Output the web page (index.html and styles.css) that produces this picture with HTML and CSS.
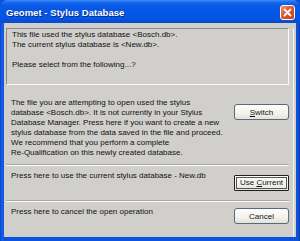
FILE: index.html
```html
<!DOCTYPE html>
<html>
<head>
<meta charset="utf-8">
<link rel="stylesheet" href="styles.css">
</head>
<body>
<div class="window">
  <div class="titlebar">
    <span class="title">Geomet - Stylus Database</span>
    <span class="close">
      <svg width="9" height="9" viewBox="0 0 9 9"><path d="M1.5 1.5 L7.5 7.5 M7.5 1.5 L1.5 7.5" stroke="#fff" stroke-width="1.8" stroke-linecap="round"/></svg>
    </span>
  </div>
  <div class="client">
    <div class="content">
      <div class="infobox">
        <div>This file used the stylus database &lt;Bosch.db&gt;.</div>
        <div>The current stylus database is &lt;New.db&gt;.</div>
        <div>&nbsp;</div>
        <div>Please select from the following...?</div>
      </div>
      <div class="row row-switch">
        <p class="text">The file you are attempting to open used the stylus<br>database &lt;Bosch.db&gt;. It is not currently in your Stylus<br>Database Manager. Press here if you want to create a new<br>stylus database from the data saved in the file and proceed.<br>We recommend that you perform a complete<br>Re-Qualification on this newly created database.</p>
        <button class="btn"><u>S</u>witch</button>
      </div>
      <div class="sep"></div>
      <div class="row row-use">
        <p class="text">Press here to use the current stylus database - New.db</p>
        <button class="btn btn-default"><span class="focus">Use <u>C</u>urrent</span></button>
      </div>
      <div class="sep"></div>
      <div class="row row-cancel">
        <p class="text">Press here to cancel the open operation</p>
        <button class="btn">Cancel</button>
      </div>
    </div>
  </div>
</div>
</body>
</html>
```
FILE: styles.css
```css
html, body {
  margin: 0;
  padding: 0;
  width: 300px;
  height: 241px;
  overflow: hidden;
  background: #0a4fd0;
}
.window {
  width: 300px;
  height: 241px;
  display: flex;
  flex-direction: column;
  background: linear-gradient(90deg, #0843c4 0px, #1a60e8 2px, #0a54e0 4px, #0a54e0 296px, #1350d8 298px, #0839b0 300px);
  border-radius: 7px 7px 0 0;
  font-family: "Liberation Sans", Arial, sans-serif;
  font-size: 8px;
  color: #111;
}
.titlebar {
  height: 23px;
  flex: none;
  box-sizing: border-box;
  display: flex;
  align-items: center;
  justify-content: space-between;
  padding: 2px 5px 0 6px;
  border-radius: 7px 7px 0 0;
  background: linear-gradient(180deg, #3d8ef8 0px, #1c6cf0 2px, #0a5ae6 5px, #0355e4 12px, #0456e6 18px, #0a4dd2 21px, #0a48c8 23px);
}
.title {
  color: #fff;
  font-family: "Liberation Sans", Arial, sans-serif;
  font-weight: bold;
  font-size: 9.5px;
  letter-spacing: 0.05px;
  text-shadow: 1px 1px 0 #0a2a8a;
}
.close {
  width: 15px;
  height: 15px;
  margin-top: -1px;
  box-sizing: border-box;
  border: 1px solid #fff;
  border-radius: 3px;
  background: linear-gradient(135deg, #f0916a 0%, #e0582e 45%, #c83a14 100%);
  display: flex;
  align-items: center;
  justify-content: center;
}
.client {
  flex: 1;
  margin: 0 4px 4px 4px;
  background: #d0cfcc;
  display: flex;
  padding: 5px 2px 0 2px;
}
.content {
  flex: 1;
  border-right: 1px solid #f4f4f2;
  padding-right: 4px;
  display: flex;
  flex-direction: column;
}
.infobox {
  height: 57px;
  box-sizing: border-box;
  flex: none;
  border-top: 1px solid #8a8a88;
  border-left: 1px solid #8a8a88;
  border-bottom: 1px solid #fbfbfb;
  border-right: 1px solid #fbfbfb;
  padding: 1px 0 0 5px;
  line-height: 10px;
}
.row {
  display: flex;
  align-items: flex-start;
  justify-content: space-between;
  box-sizing: border-box;
  flex: none;
}
.text {
  margin: 0;
  line-height: 10px;
}
.row-switch {
  padding: 13px 0 0 5px;
  height: 79px;
}
.row-switch .btn {
  margin-top: 6px;
}
.row-use {
  padding: 5px 0 0 5px;
  height: 34px;
}
.row-use .btn {
  margin-top: 4px;
}
.row-cancel {
  padding: 5px 0 0 5px;
  height: 34px;
}
.row-cancel .btn {
  margin-top: 1px;
}
.sep {
  height: 1px;
  flex: none;
  border-top: 1px solid #a8a8a6;
  background: #fafafa;
}
.btn {
  width: 55px;
  height: 16px;
  box-sizing: border-box;
  padding: 0;
  border: 1px solid #5a6a7e;
  border-radius: 3px;
  background: linear-gradient(180deg, #fdfdfb 0%, #f3f2ec 60%, #e4e2d8 100%);
  font-family: "Liberation Sans", Arial, sans-serif;
  font-size: 8px;
  color: #111;
  display: flex;
  align-items: center;
  justify-content: center;
  flex: none;
}
.btn-default {
  border: 1px solid #222;
  border-radius: 1px;
  padding: 1px;
}
.focus {
  display: block;
  width: 100%;
  height: 100%;
  line-height: 10px;
  box-sizing: border-box;
  border: 1px solid #555;
  text-align: center;
}
```
